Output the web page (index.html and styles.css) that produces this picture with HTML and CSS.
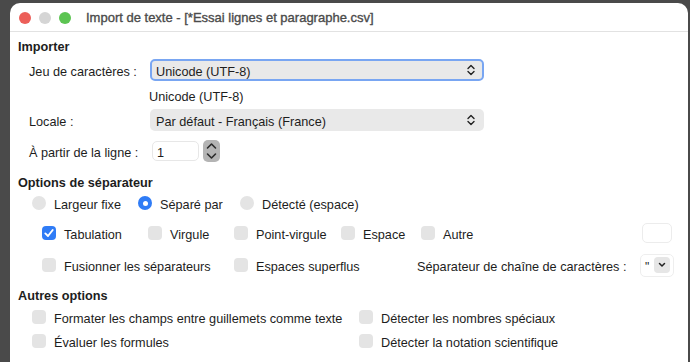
FILE: index.html
```html
<!DOCTYPE html>
<html lang="fr">
<head>
    <meta charset="UTF-8">
    <meta name="viewport" content="width=device-width, initial-scale=1.0">
    <title>Import de texte</title>
    <link rel="stylesheet" href="styles.css">
</head>
<body>
    <div class="window">
        <div class="titlebar">
            <span class="light light-red"></span>
            <span class="light light-gray"></span>
            <span class="light light-green"></span>
            <span class="title">Import de texte - [*Essai lignes et paragraphe.csv]</span>
        </div>
        <div class="content">
            <div class="heading heading-import"><span class="txt">Importer</span></div>

            <div class="form-row row-charset">
                <span class="field-label txt">Jeu de caractères :</span>
                <div class="select select-focused">
                    <span class="txt">Unicode (UTF-8)</span>
                    <svg class="updown" width="8" height="12" viewBox="0 0 8 12"><path d="M1 4.5 L4 1.5 L7 4.5 M1 7.5 L4 10.5 L7 7.5" fill="none" stroke="#222" stroke-width="1.4" stroke-linecap="round" stroke-linejoin="round"/></svg>
                </div>
            </div>
            <div class="form-row row-preview">
                <span class="preview txt">Unicode (UTF-8)</span>
            </div>
            <div class="form-row row-locale">
                <span class="field-label txt">Locale :</span>
                <div class="select">
                    <span class="txt">Par défaut - Français (France)</span>
                    <svg class="updown" width="8" height="12" viewBox="0 0 8 12"><path d="M1 4.5 L4 1.5 L7 4.5 M1 7.5 L4 10.5 L7 7.5" fill="none" stroke="#222" stroke-width="1.4" stroke-linecap="round" stroke-linejoin="round"/></svg>
                </div>
            </div>
            <div class="form-row row-start">
                <span class="field-label txt">À partir de la ligne :</span>
                <div class="number-input"><span class="txt">1</span></div>
                <div class="spinner">
                    <svg width="17" height="22" viewBox="0 0 17 22"><path d="M4.5 8 L8.5 4 L12.5 8 M4.5 14 L8.5 18 L12.5 14" fill="none" stroke="#2a2a2a" stroke-width="1.6" stroke-linecap="round" stroke-linejoin="round"/></svg>
                </div>
            </div>

            <div class="heading heading-sep"><span class="txt">Options de séparateur</span></div>

            <div class="option-row row-radios">
                <div class="opt w-106"><span class="radio"></span><span class="txt">Largeur fixe</span></div>
                <div class="opt w-102"><span class="radio radio-on"></span><span class="txt">Séparé par</span></div>
                <div class="opt"><span class="radio"></span><span class="txt">Détecté (espace)</span></div>
            </div>
            <div class="option-row row-seps">
                <div class="opt w-106"><span class="check check-on"><svg width="14" height="14" viewBox="0 0 14 14"><path d="M3.3 7.4 L6 10 L10.7 4" fill="none" stroke="#fff" stroke-width="1.9" stroke-linecap="round" stroke-linejoin="round"/></svg></span><span class="txt">Tabulation</span></div>
                <div class="opt w-86"><span class="check"></span><span class="txt">Virgule</span></div>
                <div class="opt w-107"><span class="check"></span><span class="txt">Point-virgule</span></div>
                <div class="opt w-80"><span class="check"></span><span class="txt">Espace</span></div>
                <div class="opt"><span class="check"></span><span class="txt">Autre</span></div>
                <div class="spacer"></div>
                <div class="other-input"></div>
            </div>
            <div class="option-row row-merge">
                <div class="opt w-192"><span class="check"></span><span class="txt">Fusionner les séparateurs</span></div>
                <div class="opt w-183"><span class="check"></span><span class="txt">Espaces superflus</span></div>
                <span class="quote-label txt">Séparateur de chaîne de caractères :</span>
                <div class="combo">
                    <span class="combo-value txt">"</span>
                    <span class="combo-button"><svg width="16" height="16" viewBox="0 0 16 16"><path d="M5.5 6.5 L8 9 L10.5 6.5" fill="none" stroke="#222" stroke-width="1.5" stroke-linecap="round" stroke-linejoin="round"/></svg></span>
                </div>
            </div>

            <div class="heading heading-other"><span class="txt">Autres options</span></div>

            <div class="option-row row-other">
                <div class="opt w-327"><span class="check"></span><span class="txt">Formater les champs entre guillemets comme texte</span></div>
                <div class="opt"><span class="check"></span><span class="txt">Détecter les nombres spéciaux</span></div>
            </div>
            <div class="option-row row-other">
                <div class="opt w-327"><span class="check"></span><span class="txt">Évaluer les formules</span></div>
                <div class="opt"><span class="check"></span><span class="txt">Détecter la notation scientifique</span></div>
            </div>
        </div>
    </div>
</body>
</html>
```

FILE: styles.css
```css
body {
    margin: 0;
    background-color: #4a4a4a;
    font-family: 'Liberation Sans', Arial, sans-serif;
    font-size: 12.7px;
    color: #1d1d1d;
    overflow: hidden;
    height: 362px;
}
.window {
    margin: 3px 2px 0 10px;
    height: 359px;
    background-color: #fff;
    border-radius: 10px 10px 0 0;
    overflow: hidden;
}
.titlebar {
    height: 29px;
    border-bottom: 1px solid #e2e2e2;
    display: flex;
    align-items: center;
    padding-left: 9px;
    padding-top: 1px;
    box-sizing: border-box;
}
.light {
    width: 12px;
    height: 12px;
    border-radius: 50%;
    margin-right: 8px;
}
.light-red { background-color: #ec5f59; }
.light-gray { background-color: #d5d5d5; }
.light-green { background-color: #5cc452; }
.title {
    margin-left: 7px;
    font-size: 13px;
    color: #4b4b4b;
    -webkit-text-stroke: 0.35px #4b4b4b;
}
.content {
    padding-left: 8px;
}
/* nudges the glyphs down so they sit on the same centre line as macOS text */
.txt {
    padding-top: 3px;
}
.heading {
    font-weight: bold;
    display: flex;
    align-items: center;
}
.heading-import { height: 26px; }
.heading-sep { height: 22px; }
.heading-other { height: 21px; margin-top: 6px; }

.form-row {
    display: flex;
    align-items: center;
    padding-left: 11px;
}
.row-charset { height: 24px; }
.row-preview { height: 26px; }
.row-locale { height: 24px; }
.row-start { height: 38px; }
.field-label {
    width: 121px;
}
.select {
    width: 334px;
    height: 22px;
    box-sizing: border-box;
    background-color: #e9e9e9;
    border-radius: 5px;
    display: flex;
    align-items: center;
    justify-content: space-between;
    padding: 0 9px 0 6px;
}
.select-focused {
    border: 2px solid #79a6f2;
    padding: 0 7px 0 4px;
}
.preview {
    margin-left: 120px;
}
.number-input {
    margin-left: 2px;
    width: 47px;
    height: 20px;
    box-sizing: border-box;
    border: 1px solid #e7e7e7;
    border-radius: 5px;
    display: flex;
    align-items: center;
    padding-left: 4px;
}
.spinner {
    margin-left: 4px;
    width: 17px;
    height: 22px;
    background-color: #b4b4b4;
    border-radius: 5px;
}
.spinner svg { display: block; }

.option-row {
    display: flex;
    align-items: center;
}
.row-radios { height: 22px; padding-left: 14px; }
.row-seps { height: 38px; padding-left: 24px; padding-right: 16px; }
.row-merge { height: 26px; padding-left: 24px; }
.row-other { height: 24px; padding-left: 14px; }
.opt {
    display: flex;
    align-items: center;
    white-space: nowrap;
}
.w-80 { width: 80px; }
.w-86 { width: 86px; }
.w-102 { width: 102px; }
.w-106 { width: 106px; }
.w-107 { width: 107px; }
.w-183 { width: 183px; }
.w-192 { width: 192px; }
.w-327 { width: 327px; }
.radio, .check {
    width: 14px;
    height: 14px;
    background-color: #e4e4e4;
    margin-right: 8px;
    flex-shrink: 0;
}
.radio { border-radius: 50%; }
.check { border-radius: 4px; }
.radio-on {
    background-color: #2f7cf6;
    display: flex;
    align-items: center;
    justify-content: center;
}
.radio-on::after {
    content: '';
    width: 5px;
    height: 5px;
    border-radius: 50%;
    background-color: #fff;
}
.check-on { background-color: #2f7cf6; }
.check-on svg { display: block; }
.spacer { flex: 1; }
.other-input {
    width: 30px;
    height: 20px;
    border: 1px solid #ececec;
    border-radius: 5px;
    box-sizing: border-box;
}
.quote-label {
    width: 223px;
}
.combo {
    width: 34px;
    height: 23px;
    box-sizing: border-box;
    border: 1px solid #eeeeee;
    border-radius: 5px;
    display: flex;
    align-items: center;
    padding-left: 4px;
}
.combo-value {
    width: 9px;
    font-size: 12px;
}
.combo-button {
    width: 16px;
    height: 16px;
    border-radius: 4px;
    background-color: #e6e6e6;
}
.combo-button svg { display: block; }
```
